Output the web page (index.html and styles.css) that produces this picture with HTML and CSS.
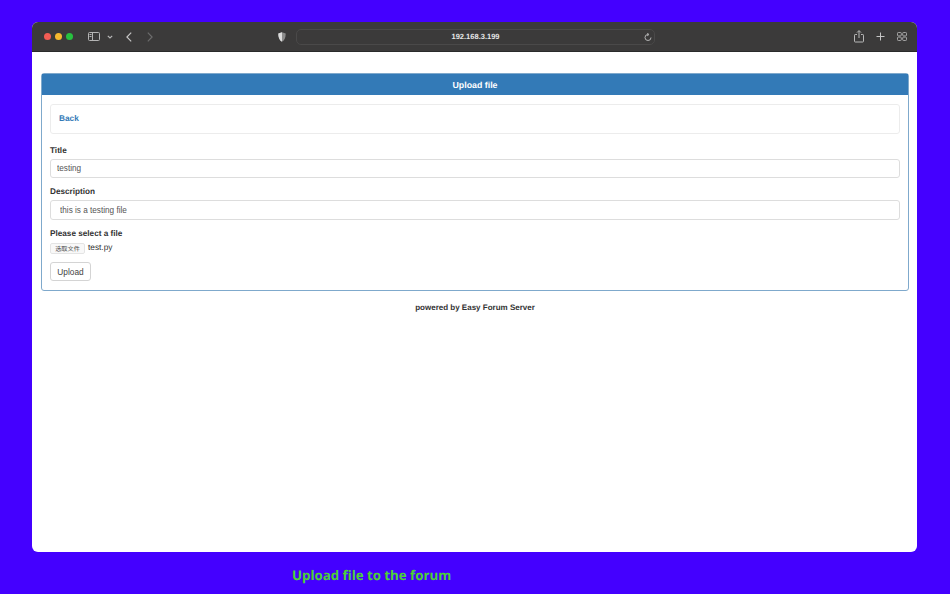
FILE: index.html
```html
<!DOCTYPE html>
<html lang="en">
<head>
<meta charset="utf-8">
<title>Upload file</title>
<link rel="stylesheet" href="styles.css">
</head>
<body>
<div class="window">
  <div class="toolbar">
    <div class="lights"><span class="light red"></span><span class="light yellow"></span><span class="light green"></span></div>
    <svg class="ic sidebar" width="12" height="9" viewBox="0 0 12 9" fill="none" stroke="#b4b4b4"><rect x=".5" y=".5" width="11" height="8" rx="1"/><path d="M4.5 .5v8M1.5 2.5h2M1.5 4.5h2" /></svg>
    <svg class="ic chev" width="6" height="4" viewBox="0 0 6 4" fill="none" stroke="#b4b4b4" stroke-width="1.2"><path d="M.8 .8 3 3l2.2-2.2"/></svg>
    <svg class="ic back" width="6" height="10" viewBox="0 0 6 10" fill="none" stroke="#c4c4c4" stroke-width="1.2"><path d="M5.2 .6.9 5l4.3 4.4"/></svg>
    <svg class="ic fwd" width="6" height="10" viewBox="0 0 6 10" fill="none" stroke="#6c6c6c" stroke-width="1.2"><path d="M.8 .6 5.1 5 .8 9.4"/></svg>
    <svg class="ic shield" width="8" height="10" viewBox="0 0 8 10"><path d="M4 .3 7.7 1.4c0 4-1 6.700-3.700 8.300C1.300 8.100.3 5.400.3 1.400z" fill="#8c8c8c"/><path d="M4 .3 .3 1.400c0 4 1 6.700 3.700 8.300z" fill="#dcdcdc"/></svg>
    <div class="address">
      <span class="url">192.168.3.199</span>
      <svg class="reload" width="8" height="9" viewBox="0 0 8 9" fill="none" stroke="#b4b4b4"><path d="M4 1.500a3 3 0 1 0 3 3"/><path d="M3.200 .2 5 1.500 3.200 2.800" /></svg>
    </div>
    <svg class="ic share" width="10" height="13" viewBox="0 0 10 13" fill="none" stroke="#b8b8b8"><path d="M3 4.500H1.200a.7.7 0 0 0-.7.7v6.100a.7.700 0 0 0 .7.700h7.600a.7.700 0 0 0 .7-.700V5.200a.7.700 0 0 0-.7-.700H7M5 8V.8M3 2.600 5 .6l2 2"/></svg>
    <svg class="ic plus" width="9" height="9" viewBox="0 0 9 9" stroke="#c4c4c4"><path d="M4.500 .5v8M.5 4.500h8"/></svg>
    <svg class="ic tabs" width="10" height="9" viewBox="0 0 10 9" fill="none" stroke="#b0b0b0" stroke-width=".9"><rect x=".5" y=".5" width="3.800" height="3.400" rx=".8"/><rect x="5.700" y=".5" width="3.800" height="3.400" rx=".8"/><rect x=".5" y="5.100" width="3.800" height="3.400" rx=".8"/><rect x="5.700" y="5.100" width="3.800" height="3.400" rx=".8"/></svg>
  </div>
  <div class="page">
    <div class="panel">
      <div class="panel-heading">Upload file</div>
      <div class="panel-body">
        <div class="well"><a class="back-link" href="#">Back</a></div>
        <form>
          <div class="group">
            <label class="label" for="title">Title</label>
            <input class="control control-short" id="title" type="text" value="testing">
          </div>
          <div class="group">
            <label class="label" for="desc">Description</label>
            <input class="control control-wide" id="desc" type="text" value="this is a testing file">
          </div>
          <div class="group">
            <div class="label label-tight">Please select a file</div>
            <div class="file-row"><span class="file-btn">选取文件</span><span class="file-name">test.py</span></div>
          </div>
          <button class="btn" type="button">Upload</button>
        </form>
      </div>
    </div>
    <div class="footer">powered by Easy Forum Server</div>
  </div>
</div>
<div class="caption">Upload file to the forum</div>
</body>
</html>
```
FILE: styles.css
```css
* { box-sizing: border-box; }
html, body { margin: 0; height: 594px; overflow: hidden; }
body {
  background: #4400ff;
  padding: 22px 33px 0 32px;
  font-family: "Liberation Sans", Arial, sans-serif;
  color: #333;
  text-rendering: geometricPrecision;
}
.window {
  height: 530px;
  background: #fff;
  border-radius: 6px;
  overflow: hidden;
  display: flex;
  flex-direction: column;
}
.toolbar {
  height: 30px;
  flex: none;
  background: #3b3a3a;
  border-bottom: 1px solid #2a2a2a;
  display: flex;
  align-items: center;
  padding-left: 12px;
}
.lights { display: flex; gap: 4px; }
.light { width: 7px; height: 7px; border-radius: 50%; }
.red { background: #f25c54; }
.yellow { background: #f5b82e; }
.green { background: #27c13f; }
.ic { flex: none; display: block; }
.sidebar { margin-left: 15px; }
.chev { margin-left: 7px; }
.back { margin-left: 13px; }
.fwd { margin-left: 15px; }
.shield { margin-left: 125px; }
.address {
  width: 359px;
  height: 16px;
  margin-left: 10px;
  border: 1px solid #4a4949;
  border-radius: 5px;
  display: flex;
  align-items: center;
  justify-content: center;
  position: relative;
}
.url { font-size: 7.500px; font-weight: 700; color: #e6e6e6; }
.reload { position: absolute; right: 2px; top: 3px; }
.share { margin-left: 199px; }
.plus { margin-left: 12px; }
.tabs { margin-left: 12px; }
.page { flex: 1; padding: 21px 8px 0 9px; }
.panel {
  border: 1px solid #7fa9cc;
  border-radius: 3px;
  height: 218px;
}
.panel-heading {
  height: 21px;
  background: #337ab7;
  color: #fff;
  font-size: 8.800px;
  font-weight: 700;
  line-height: 23px;
  text-align: center;
}
.panel-body { padding: 9px 8px 8px; }
.well {
  height: 30px;
  border: 1px solid #ececec;
  border-radius: 3px;
  padding: 0 8px;
  line-height: 23px;
  margin-bottom: 11px;
}
.back-link { color: #337ab7; font-size: 8.300px; font-weight: 700; text-decoration: none; }
.group { margin-bottom: 8px; }
.label { display: block; font-size: 8.200px; font-weight: 700; line-height: 12px; margin-bottom: 2px; color: #333; }
.label-tight { margin-bottom: 0; }
.control {
  display: block;
  width: 100%;
  height: 20px;
  border: 1px solid #ddd;
  border-radius: 3px;
  padding: 0 6px;
  font: 8.200px "Liberation Sans", Arial, sans-serif;
  color: #555;
  background: #fff;
  outline: none;
}
.control-short { height: 19px; }
.control-wide { padding-left: 9px; }
.file-row { display: flex; align-items: center; height: 14px; }
.file-btn {
  width: 35px;
  height: 11px;
  margin: 2px 3px 0 0;
  border: 1px solid #e4e4e4;
  border-radius: 2px;
  background: #f8f8f8;
  font: 6.200px/9px "Noto Sans CJK SC", sans-serif;
  text-align: center;
  color: #444;
}
.file-name { font-size: 8.300px; color: #333; margin-top: -1px; }
.btn {
  display: block;
  width: 41px;
  height: 19px;
  padding: 0;
  background: #fff;
  border: 1px solid #d4d4d4;
  border-radius: 3px;
  font: 8.300px "Liberation Sans", Arial, sans-serif;
  color: #444;
}
.footer { margin-top: 11px; text-align: center; font-size: 8px; font-weight: 700; line-height: 12px; }
.caption {
  margin: 14px 0 0 260px;
  font: 700 13.250px/18px "Open Sans", sans-serif;
  color: #4cd137;
}
```
